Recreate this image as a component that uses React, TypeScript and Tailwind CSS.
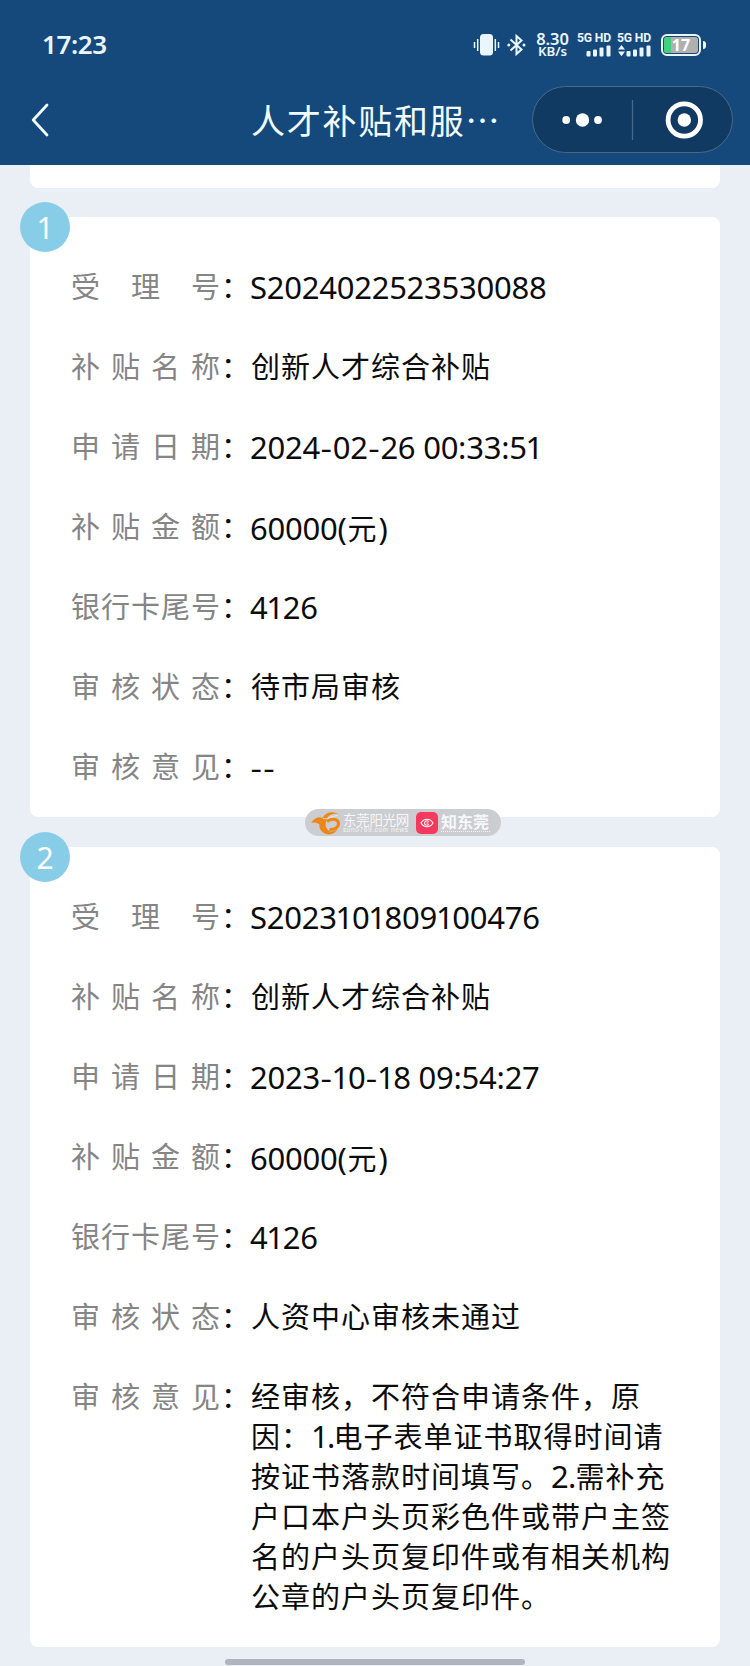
import React from "react";

type Row = { label: string; value: string; latin?: boolean };

const firstRecord: Row[] = [
  { label: "受理号", value: "S2024022523530088", latin: true },
  { label: "补贴名称", value: "创新人才综合补贴" },
  { label: "申请日期", value: "2024-02-26 00:33:51", latin: true },
  { label: "补贴金额", value: "60000(元)", latin: true },
  { label: "银行卡尾号", value: "4126", latin: true },
  { label: "审核状态", value: "待市局审核" },
  { label: "审核意见", value: "--", latin: true },
];

const secondRecord: Row[] = [
  { label: "受理号", value: "S2023101809100476", latin: true },
  { label: "补贴名称", value: "创新人才综合补贴" },
  { label: "申请日期", value: "2023-10-18 09:54:27", latin: true },
  { label: "补贴金额", value: "60000(元)", latin: true },
  { label: "银行卡尾号", value: "4126", latin: true },
  { label: "审核状态", value: "人资中心审核未通过" },
];

const opinionLines = [
  "经审核，不符合申请条件，原",
  "因：1.电子表单证书取得时间请",
  "按证书落款时间填写。2.需补充",
  "户口本户头页彩色件或带户主签",
  "名的户头页复印件或有相关机构",
  "公章的户头页复印件。",
];

const cjk = "font-['Noto_Sans_CJK_SC',sans-serif] text-[29px] tracking-[1px]";

function Label({ text }: { text: string }) {
  return (
    <div className="flex shrink-0 pl-px leading-[37px]">
      <div className={`flex w-[150px] justify-between text-[#858585] ${cjk}`}>
        {text.split("").map((ch, i) => (
          <span key={i}>{ch}</span>
        ))}
      </div>
      <span className={`w-[30px] ${cjk}`}>：</span>
    </div>
  );
}

function LatinValue({ text }: { text: string }) {
  return (
    <span className="-ml-px whitespace-pre font-['Noto_Sans',sans-serif] text-[31px] tracking-[-0.25px]">
      {text.split(/(-|1|元)/).map((part, i) => {
        if (part === "-")
          return (
            <span key={i} className="font-['Inter',sans-serif] text-[27px] tracking-[0.3px]">
              -
            </span>
          );
        if (part === "1")
          return (
            <span key={i} className="-mx-[1.15px]">
              1
            </span>
          );
        if (part === "元")
          return (
            <span key={i} className={`mx-px ${cjk}`}>
              元
            </span>
          );
        return part;
      })}
    </span>
  );
}

function Field({ row }: { row: Row }) {
  return (
    <div className="flex h-10 leading-10">
      <Label text={row.label} />
      {row.latin ? <LatinValue text={row.value} /> : <span className={`leading-[37px] ${cjk}`}>{row.value}</span>}
    </div>
  );
}

function OpinionLine({ text }: { text: string }) {
  return (
    <span className="h-10 leading-[37px]">
      {text.split(/(\d\.)/).map((part, i) =>
        /^\d/.test(part) ? (
          <span
            key={i}
            className={`font-['Noto_Sans',sans-serif] text-[31px] ${part === "1." ? "tracking-[-1.8px]" : "tracking-[-0.8px]"}`}
          >
            {part}
          </span>
        ) : (
          part
        ),
      )}
    </span>
  );
}

function Card({ index, children }: { index: number; children: React.ReactNode }) {
  return (
    <section className="relative flex flex-col gap-10 rounded-lg bg-white pt-[50px] pr-10 pb-[30px] pl-10">
      <div className="absolute -top-[15px] -left-[10px] flex size-[50px] items-center justify-center rounded-full bg-[#88cde7] font-['Noto_Sans',sans-serif] text-[30px] text-white">
        {index}
      </div>
      {children}
    </section>
  );
}

function Signal({ data }: { data?: boolean }) {
  return (
    <div className="flex w-[35px] flex-col items-end">
      <span className="h-[12px] w-[35px] font-['Roboto',sans-serif] text-[12.2px] leading-[11px] font-bold tracking-[-0.2px] whitespace-nowrap">
        5G HD
      </span>
      <svg width="35" height="12" viewBox="0 0 35 12" fill="#eaf6ff">
        {data && <path d="M4.5 0 8 4.4H1ZM4.5 11.2 1 6.6h7Z" />}
        <rect x="9.5" y="6" width="4" height="5.5" rx="1" />
        <rect x="16" y="4.5" width="4" height="7" rx="1" />
        <rect x="22.5" y="2.5" width="4" height="9" rx="1" />
        <rect x="29.5" y="0.5" width="4" height="11" rx="1" />
      </svg>
    </div>
  );
}

function StatusBar() {
  return (
    <div className="flex h-[89px] items-center justify-between pr-[44px] pl-[42px] text-[#eaf6ff]">
      <span className="font-['Noto_Sans',sans-serif] text-[26px] font-semibold tracking-[-0.4px]">17:23</span>
      <div className="flex items-center">
        <svg className="mr-[7px]" width="27" height="24" viewBox="0 0 27 24" fill="#eaf6ff">
          <rect x="7" y="1" width="13" height="21.5" rx="3.5" />
          <path d="M4.7 6v12M1.5 9v6M22.3 6v12M25.5 9v6" stroke="#eaf6ff" strokeWidth="1.5" />
        </svg>
        <svg className="mr-[10px]" width="19" height="24" viewBox="0 0 19 24" fill="none" stroke="#eaf6ff" strokeWidth="2">
          <path d="m3.5 6.5 11 10-5 4.5V3l5 4.5-11 10" />
          <circle cx="1.8" cy="12" r="1.5" fill="#eaf6ff" stroke="none" />
          <circle cx="17" cy="12" r="1.5" fill="#eaf6ff" stroke="none" />
        </svg>
        <div className="mr-[8px] flex w-[33px] flex-col items-center font-['Noto_Sans',sans-serif] font-semibold whitespace-nowrap">
          <span className="text-[16.5px] leading-[13px] tracking-[-0.1px]">8.30</span>
          <span className="text-[13.3px] leading-[13px]">KB/s</span>
        </div>
        <div className="mr-[5px]">
          <Signal />
        </div>
        <div className="mr-[9px]">
          <Signal data />
        </div>
        <div className="flex items-center">
          <div className="relative flex h-[22px] w-[40px] items-center justify-center overflow-hidden rounded-[6px] border-2 border-[#eaf6ff]">
            <div className="flex h-[16px] w-[34px] overflow-hidden rounded-[3px] bg-[#b0b0b0]">
              <div className="h-full w-[7px] bg-[#43cf7c]" />
            </div>
            <span className="absolute inset-0 text-center font-['Noto_Sans',sans-serif] text-[16px] leading-[18px] font-bold text-white">
              17
            </span>
          </div>
          <div className="ml-[2px] h-[8px] w-[3px] rounded-r-full bg-[#eaf6ff]" />
        </div>
      </div>
    </div>
  );
}

function NavBar() {
  return (
    <div className="-mt-[3px] flex h-[67px] items-center pr-[17px] pl-[31px]">
      <svg width="20" height="34" viewBox="0 0 20 34" fill="none" stroke="#f2fbff" strokeWidth="2.8" strokeLinecap="round" strokeLinejoin="round">
        <path d="M16 2 2.2 17 16 32" />
      </svg>
      <h1 className="ml-[200px] w-[281px] font-['Noto_Sans_CJK_SC',sans-serif] text-[34px] leading-[50px] tracking-[1.75px] whitespace-nowrap text-[#f2fbff]">
        人才补贴和服…
      </h1>
      <div className="flex h-[67px] w-[201px] items-center rounded-full border border-[#48698a] bg-[#103a61]">
        <svg width="199" height="65" viewBox="0 0 199 65">
          <g fill="#fff">
            <circle cx="33.2" cy="33" r="3.9" />
            <circle cx="49.5" cy="33" r="6.7" />
            <circle cx="65" cy="33" r="3.9" />
            <circle cx="151.3" cy="33" r="6.7" />
          </g>
          <path d="M99.5 13v40" stroke="#48698a" strokeWidth="1.3" />
          <circle cx="151.3" cy="33" r="16.2" fill="none" stroke="#fff" strokeWidth="4.8" />
        </svg>
      </div>
    </div>
  );
}

function SourceMark() {
  return (
    <div className="absolute top-[809px] left-[305px] flex h-[27px] w-[196px] items-center rounded-full bg-[#cccdd1] pl-[5px] text-[#f7f7f9]">
      <svg width="32" height="26" viewBox="0 0 32 26" fill="none">
        <path
          d="M1 13C5 7.500 9 6.500 12.500 8 15.500 2 22 .5 28.500 4 22 3 18 5.500 17 9c-2 4-2 8 1 11 3 2.500 7 2 10-2-3 7-10 8-15 4.500-3-2.500-4-5-3.500-8-3-2-5.500-2.300-8.500-1.500Z"
          fill="#ec8616"
        />
        <path d="M17 11.500c5-3.500 11-2.500 11.500 1.500.4 4-4 7-9 6.500" stroke="#ec8616" strokeWidth="3" />
        <path d="M13 8.500c4 1 9-2.500 14.500-3" stroke="#f1eee9" strokeWidth="0.8" />
      </svg>
      <div className="ml-[1px] flex w-[67px] flex-col font-['Noto_Sans_CJK_SC',sans-serif] whitespace-nowrap">
        <span className="text-[13.5px] leading-[14px] tracking-[-0.3px]">东莞阳光网</span>
        <span className="font-['Liberation_Sans',sans-serif] text-[6.5px] leading-[7px] tracking-[0.6px]">sun0769.com news</span>
      </div>
      <div className="ml-[6px] flex size-[22px] items-center justify-center rounded-[5px] bg-[#f7395f]">
        <svg width="14" height="12" viewBox="0 0 14 12" fill="none" stroke="#fff" strokeWidth="1.1">
          <path d="M1 6c3-5 9-5 12 0-3 5-9 5-12 0Z" />
          <path d="M8.7 4.6a2.3 2.3 0 1 0 0 2.8M6.500 6h2" />
        </svg>
      </div>
      <div className="ml-[3px] flex flex-col font-['Noto_Sans_CJK_SC',sans-serif] whitespace-nowrap">
        <span className="text-[16px] leading-[17px] font-bold">知东莞</span>
        <span className="mt-[1px] h-px w-[49px] border-t border-dotted border-[#f5f5f7]" />
      </div>
    </div>
  );
}

export default function App() {
  return (
    <main className="relative h-[1666px] w-[750px] overflow-hidden bg-[#eaeff6] text-[#0c0c0c]">
      <header className="h-[165px] bg-[#15497b]">
        <StatusBar />
        <NavBar />
      </header>
      <div className="flex flex-col px-[30px]">
        <div className="h-[23px] rounded-b-lg bg-white" />
        <div className="mt-[29px]">
          <Card index={1}>
            {firstRecord.map((row) => (
              <Field key={row.label} row={row} />
            ))}
          </Card>
        </div>
        <div className="mt-[30px]">
          <Card index={2}>
            {secondRecord.map((row) => (
              <Field key={row.label} row={row} />
            ))}
            <div className="flex">
              <Label text="审核意见" />
              <div className={`flex flex-col whitespace-nowrap ${cjk}`}>
                {opinionLines.map((line) => (
                  <OpinionLine key={line} text={line} />
                ))}
              </div>
            </div>
          </Card>
        </div>
      </div>
      <SourceMark />
      <div className="absolute bottom-[1px] left-[225px] h-[6px] w-[300px] rounded-full bg-[#b1b6be]" />
    </main>
  );
}
